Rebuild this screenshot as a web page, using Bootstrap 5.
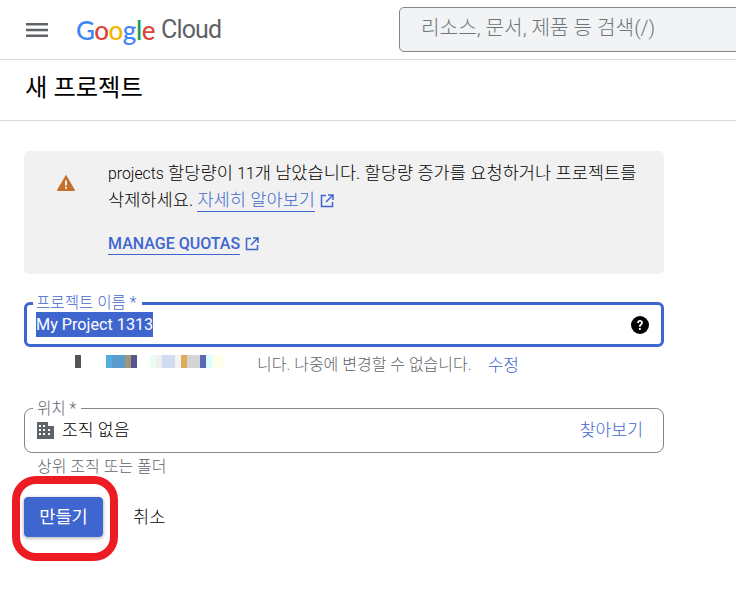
<!DOCTYPE html>
<html lang="ko">
<head>
<meta charset="utf-8">
<title>새 프로젝트</title>
<link rel="stylesheet" href="https://cdn.jsdelivr.net/npm/bootstrap@5.3.0/dist/css/bootstrap.min.css">
<style>
html,body{height:100%;overflow:hidden}
body{font-family:Roboto,"Noto Sans CJK KR",sans-serif;background:#fff;color:#000;font-size:17px;font-weight:300;position:relative}
.top-bar{height:60px;border-bottom:1px solid #dadada;padding-left:26px;overflow:hidden}
.brand{margin-left:28px;width:302px;line-height:1}
.brand-g{font-family:Lato,Roboto,sans-serif;font-size:26px;letter-spacing:-.5px;font-weight:500}
.brand-c{color:#5f6368;margin-left:6px;font-family:Roboto,sans-serif;font-size:25px;font-weight:400;letter-spacing:-.8px}
.c-b{color:#4285f4}.c-r{color:#db4437}.c-y{color:#f4b400}.c-g{color:#0f9d58}
.search-box{margin-left:21px;flex:0 0 400px;height:45px;margin-top:7px;background:#f1f3f4;border:1px solid #80868b;border-radius:5px;color:#70757a;font-size:20.2px;padding-left:21px;line-height:41px;align-self:flex-start}
.title-bar{height:61px;border-bottom:1px solid #dadada;padding-left:25px;font-size:24.3px;font-weight:400;line-height:55px}
.page-main{width:640px;margin-left:24px}
.quota{margin-top:30px;height:123px;background:#f1f1f1;border-radius:5px;padding:9px 20px 0 33px}
.quota-text{margin-left:33px;line-height:26px;font-size:17.6px}
.lat{font-size:15.8px;font-weight:300}
.quota-ic{margin-top:15px;flex:none}
.lnk{color:#3f66cf;text-decoration:none;border-bottom:1px solid #3f66cf;padding-bottom:1px}
.ext{margin-left:5px;vertical-align:-2px}
.quota-cta{display:block;margin-top:18px;font-weight:500;font-size:16px}
.field{position:relative;height:45px}
.field-a{margin-top:28px;border:3px solid #3f66cf;border-radius:6px;padding-left:9px;padding-right:12px}
.field-b{margin-top:30px;border:1px solid #80868b;border-radius:8px;padding-left:12px;padding-right:20px}
.float-lbl{position:absolute;top:-10px;left:6px;background:#fff;padding:0 6px 0 3px;font-size:15.6px;line-height:17px;color:#3f66cf}
.field-b .float-lbl{top:-8px;left:8px;padding:0 5px 0 4px;color:#5f6368}
.sel{background:#3f66cf;color:#fff;display:inline-block;height:25px;line-height:25px;font-size:16.2px;font-weight:400}
.hint-row{height:26px;margin-top:5px;color:#5f6368;font-size:16px;line-height:26px}
.blur-strip{margin-left:51px;width:182px;height:13px;margin-top:3px;flex:none}
.blur-strip span{display:block;height:13px}
.hint-act{color:#3f66cf;margin-left:16px;font-size:17px}
.org-name{margin-left:8px;font-size:17.2px}
.browse{color:#3f66cf;font-size:17.2px}
.helper{margin-left:13px;margin-top:4px;color:#5f6368;font-size:16px;line-height:20px}
.actions{margin-top:20px}
.make-btn{--bs-btn-bg:#3f66cf;--bs-btn-border-color:#3f66cf;--bs-btn-color:#fff;--bs-btn-hover-bg:#3f66cf;--bs-btn-hover-color:#fff;--bs-btn-font-weight:400;width:79px;height:40px;padding:0;font-size:17.6px;border-radius:4px;box-shadow:0 1px 3px 1px rgba(60,64,67,.3)}
.cancel{margin-left:30px;font-size:17.6px}
.red-ring{position:absolute;left:12px;top:476px;width:106px;height:85px;border:8px solid #ed1c24;border-radius:24px;pointer-events:none}
</style>
</head>
<body>
<header class="top-bar d-flex align-items-center">
  <svg width="22" height="14" viewBox="0 0 22 14" class="flex-shrink-0" aria-hidden="true"><path d="M0 0h22v2.4H0zM0 5.8h22v2.4H0zM0 11.6h22V14H0z" fill="#5f6368"/></svg>
  <div class="brand flex-shrink-0 d-flex align-items-center">
    <span class="brand-g"><span class="c-b">G</span><span class="c-r">o</span><span class="c-y">o</span><span class="c-b">g</span><span class="c-g">l</span><span class="c-r">e</span></span>
    <span class="brand-c">Cloud</span>
  </div>
  <div class="search-box text-nowrap">리소스, 문서, 제품 등 검색(/)</div>
</header>
<div class="title-bar">새 프로젝트</div>
<main class="page-main">
  <section class="quota d-flex">
    <svg class="quota-ic" width="18" height="16" viewBox="0 0 18 16" aria-hidden="true"><path d="M9 .5.3 15.5h17.4z" fill="#c5702c" stroke="#c5702c" stroke-linejoin="round"/><path d="M8 5.5h2v5H8zM8 11.7h2v2H8z" fill="#f1f1f1"/></svg>
    <div class="quota-text">
      <div class="text-nowrap"><span class="lat">projects</span> 할당량이 <span class="lat">11</span>개 남았습니다. 할당량 증가를 요청하거나 프로젝트를</div>
      <div class="text-nowrap">삭제하세요. <a class="lnk" href="#">자세히 알아보기</a><svg class="ext" width="14" height="14" viewBox="0 0 14 14" aria-hidden="true"><path d="M6 1.5H1.5v11h11V8M8 1h5v5M13 1 6 8" fill="none" stroke="#3f66cf" stroke-width="1.5"/></svg></div>
      <div class="quota-cta"><a class="lnk" href="#">MANAGE QUOTAS</a><svg class="ext" width="14" height="14" viewBox="0 0 14 14" aria-hidden="true"><path d="M6 1.5H1.5v11h11V8M8 1h5v5M13 1 6 8" fill="none" stroke="#3f66cf" stroke-width="1.5"/></svg></div>
    </div>
  </section>

  <div class="field field-a d-flex align-items-center justify-content-between">
    <span class="float-lbl">프로젝트 이름 *</span>
    <span class="sel">My Project 1313</span>
    <svg width="18" height="18" viewBox="0 0 18 18" aria-hidden="true"><circle cx="9" cy="9" r="9" fill="#000"/><path d="M6.1 7c0-1.7 1.3-2.9 2.9-2.9s2.9 1.1 2.9 2.7c0 2-2.1 2.1-2.1 4H7.9c0-2.7 2.1-2.6 2.1-4 0-.6-.4-1-1-1s-1 .5-1 1.2z" fill="#fff"/><path d="M7.9 12h1.9v1.9H7.9z" fill="#fff"/></svg>
  </div>
  <div class="hint-row d-flex">
    <div class="blur-strip d-flex">
      <span style="width:6px;background:#555"></span><span style="width:25px"></span><span style="width:6px;background:#55addd"></span><span style="width:13px;background:#5b9bd0"></span><span style="width:6px;background:#a09678"></span><span style="width:6px;background:#575490"></span><span style="width:13px"></span><span style="width:6px;background:#ebfdf0"></span><span style="width:6px;background:#f0f0f0"></span><span style="width:13px;background:#d2dcf0"></span><span style="width:6px;background:#f3f3f3"></span><span style="width:6px;background:#dcad5a"></span><span style="width:13px;background:#d5d5d5"></span><span style="width:6px;background:#5a69b0"></span><span style="width:6px;background:#dcfdff"></span><span style="width:13px;background:#fdffec"></span>
    </div>
    <span class="text-nowrap">니다. 나중에 변경할 수 없습니다.</span>
    <a class="hint-act text-decoration-none" href="#">수정</a>
  </div>

  <div class="field field-b d-flex align-items-center">
    <span class="float-lbl">위치 *</span>
    <svg width="17" height="17" viewBox="0 0 17 17" aria-hidden="true"><path fill-rule="evenodd" d="M0 0h11v4h6v13H0zM2 3v2h2V3zm4 0v2h2V3zM2 7v2h2V7zm4 0v2h2V7zm5 0v2h2V7zM2 11v2h2v-2zm4 0v2h2v-2zm5 0v2h2v-2z" fill="#5f6368"/></svg>
    <span class="org-name">조직 없음</span>
    <a class="browse ms-auto text-decoration-none" href="#">찾아보기</a>
  </div>
  <div class="helper">상위 조직 또는 폴더</div>

  <div class="actions d-flex align-items-center">
    <button class="btn make-btn" type="button">만들기</button>
    <span class="cancel">취소</span>
  </div>
</main>
<div class="red-ring"></div>
<script src="https://cdn.jsdelivr.net/npm/bootstrap@5.3.0/dist/js/bootstrap.bundle.min.js"></script>
</body>
</html>
